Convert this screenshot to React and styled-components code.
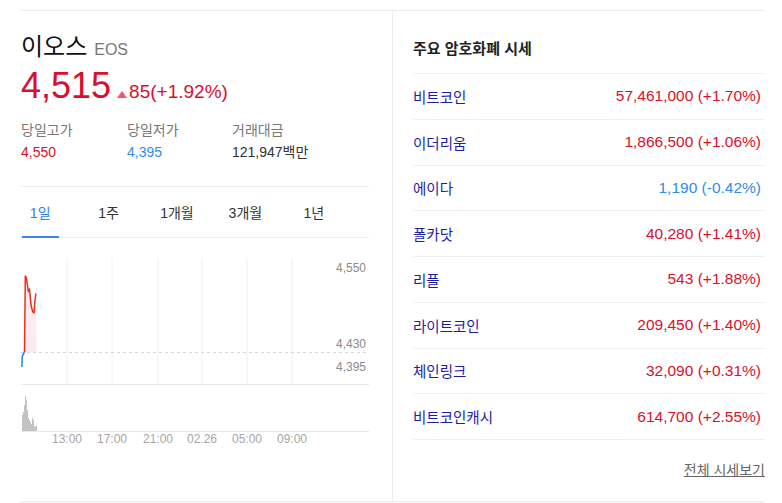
import React from 'react';
import styled, { createGlobalStyle } from 'styled-components';

const GlobalStyle = createGlobalStyle`
  body {
    margin: 0;
    background: #fff;
    font-family: "Liberation Sans", "Noto Sans CJK KR", sans-serif;
  }
`;

const RED = '#d9102a';
const BLUE = '#2f8cf0';

const Board = styled.div`
  display: grid;
  grid-template-columns: 371px 1fr;
  width: 744px;
  height: 492px;
  margin: 10px 0 0 21px;
  box-sizing: border-box;
  border-top: 1px solid #ebebeb;
  border-bottom: 1px solid #ebebeb;
`;

const CoinPanel = styled.section`
  padding: 23px 23px 0 0;
`;

const TitleRow = styled.div`
  display: flex;
  align-items: baseline;
  height: 26px;
  line-height: 26px;
`;

const CoinName = styled.h2`
  margin: 0;
  font-size: 24px;
  font-weight: 400;
  color: #111;
`;

const Symbol = styled.span`
  margin-left: 7px;
  font-size: 16px;
  color: #777;
`;

const PriceRow = styled.div`
  display: flex;
  align-items: baseline;
  margin-top: 6px;
  height: 40px;
  line-height: 40px;
  color: ${RED};
`;

const Price = styled.strong`
  font-size: 36px;
  font-weight: 400;
  margin-right: 6px;
`;

const UpMark = styled.span`
  display: inline-block;
  width: 0;
  height: 0;
  border-left: 5.5px solid transparent;
  border-right: 5.5px solid transparent;
  border-bottom: 7px solid #f25563;
  margin-right: 2px;
`;

const Change = styled.span`
  font-size: 19px;
`;

const Stats = styled.dl`
  display: grid;
  grid-template-columns: 106px 105px 1fr;
  margin: 14px 0 0;
  padding-bottom: 24px;
  border-bottom: 1px solid #ededed;
`;

const Stat = styled.div`
  display: flex;
  flex-direction: column;
`;

const StatLabel = styled.dt`
  font-size: 14px;
  line-height: 20px;
  color: #777;
`;

const StatValue = styled.dd`
  margin: 2px 0 0;
  font-size: 14px;
  line-height: 20px;
  color: ${({ $tone }) => ($tone === 'up' ? RED : $tone === 'down' ? BLUE : '#333')};
`;

const TabBar = styled.div`
  height: 50px;
  border-bottom: 1px solid #f0f0f0;
`;

const TabList = styled.ul`
  display: flex;
  height: 100%;
  margin: 0 0 0 -15px;
  padding: 0;
  list-style: none;
`;

const Tab = styled.li`
  display: flex;
  justify-content: center;
  width: 68.4px;
  height: 100%;
`;

const TabLabel = styled.span`
  display: flex;
  align-items: center;
  padding: 0 8px;
  margin-bottom: -1px;
  font-size: 14px;
  color: ${({ $active }) => ($active ? '#2f7fee' : '#333')};
  border-bottom: 2px solid ${({ $active }) => ($active ? '#3b86ee' : 'transparent')};
`;

const ChartBox = styled.div`
  margin-top: 12px;
  height: 200px;
`;

const MarketPanel = styled.section`
  border-left: 1px solid #ebebeb;
  padding-left: 20px;
  display: flex;
  flex-direction: column;
`;

const MarketTitle = styled.h3`
  margin: 0;
  height: 62px;
  box-sizing: border-box;
  padding-top: 27px;
  font-size: 15px;
  line-height: 22px;
  font-weight: 700;
  color: #222;
`;

const MarketList = styled.ul`
  margin: 0;
  padding: 0;
  list-style: none;
  border-bottom: 1px solid #efefef;
`;

const MarketRow = styled.li`
  display: flex;
  align-items: center;
  justify-content: space-between;
  height: 45.75px;
  box-sizing: border-box;
  padding-right: 4px;
  border-top: 1px solid #efefef;
`;

const MarketName = styled.a`
  font-size: 14.5px;
  color: #1c1ca6;
  text-decoration: none;
`;

const MarketValue = styled.span`
  font-size: 15.5px;
  color: ${({ $down }) => ($down ? BLUE : RED)};
`;

const MoreLink = styled.a`
  align-self: flex-end;
  margin-top: 21px;
  font-size: 14px;
  line-height: 18px;
  color: #666;
  text-decoration: underline;
`;

const stats = [
  { label: '당일고가', value: '4,550', tone: 'up' },
  { label: '당일저가', value: '4,395', tone: 'down' },
  { label: '거래대금', value: '121,947백만' },
];

const tabs = ['1일', '1주', '1개월', '3개월', '1년'];

const markets = [
  { name: '비트코인', value: '57,461,000 (+1.70%)' },
  { name: '이더리움', value: '1,866,500 (+1.06%)' },
  { name: '에이다', value: '1,190 (-0.42%)', down: true },
  { name: '폴카닷', value: '40,280 (+1.41%)' },
  { name: '리플', value: '543 (+1.88%)' },
  { name: '라이트코인', value: '209,450 (+1.40%)' },
  { name: '체인링크', value: '32,090 (+0.31%)' },
  { name: '비트코인캐시', value: '614,700 (+2.55%)' },
];

const gridX = [46, 91, 137, 181, 226, 271];
const timeLabels = ['13:00', '17:00', '21:00', '02.26', '05:00', '09:00'];
const volumeTops = [165, 162, 155, 146, 150, 160, 168, 170, 172, 174, 168, 170, 176, 177, 175];

function PriceChart() {
  return (
    <svg width="348" height="200" viewBox="0 0 348 200">
      {gridX.map((x) => (
        <line key={x} x1={x} y1="8" x2={x} y2="134" stroke="#f0f0f0" strokeWidth="1" />
      ))}
      <line x1="0" y1="134.5" x2="348" y2="134.5" stroke="#e8e8e8" />
      <line x1="0" y1="102.5" x2="348" y2="102.5" stroke="#d8d8d8" strokeDasharray="3 3" />
      <path
        d="M3.5 102 L4.3 26 L5 27 L5.7 30 L7.3 41.7 L8.5 39 L10 55 L11.7 61.7 L13 63 L14 50 L15 43.3 L15.5 102 Z"
        fill="#fdecef"
      />
      <path d="M0.8 117 L1.3 106 L3.5 102" fill="none" stroke="#2f8cf0" strokeWidth="1.6" />
      <path
        d="M3.5 102 L4.3 26 L5 27 L5.7 30 L7.3 41.7 L8.5 39 L10 55 L11.7 61.7 L13 63 L14 50 L15 43.3"
        fill="none"
        stroke="#e8321e"
        strokeWidth="1.5"
        strokeLinejoin="round"
      />
      <g fontFamily="Liberation Sans, sans-serif" fontSize="12" fill="#8a8a8a" textAnchor="end">
        <text x="345" y="22">4,550</text>
        <text x="345" y="98">4,430</text>
        <text x="345" y="121">4,395</text>
      </g>
      {volumeTops.map((top, i) => (
        <rect key={i} x={1 + i} y={top} width="0.8" height={181 - top} fill="#b5b5b5" />
      ))}
      <line x1="0" y1="181.5" x2="348" y2="181.5" stroke="#e8e8e8" />
      <g fontFamily="Liberation Sans, sans-serif" fontSize="12" fill="#a6a6a6" textAnchor="middle">
        {timeLabels.map((t, i) => (
          <text key={t} x={gridX[i]} y="193">
            {t}
          </text>
        ))}
      </g>
    </svg>
  );
}

export default function App() {
  return (
    <>
      <GlobalStyle />
      <Board>
        <CoinPanel>
          <TitleRow>
            <CoinName>이오스</CoinName>
            <Symbol>EOS</Symbol>
          </TitleRow>
          <PriceRow>
            <Price>4,515</Price>
            <UpMark />
            <Change>85(+1.92%)</Change>
          </PriceRow>
          <Stats>
            {stats.map((s) => (
              <Stat key={s.label}>
                <StatLabel>{s.label}</StatLabel>
                <StatValue $tone={s.tone}>{s.value}</StatValue>
              </Stat>
            ))}
          </Stats>
          <TabBar>
            <TabList>
              {tabs.map((t, i) => (
                <Tab key={t}>
                  <TabLabel $active={i === 0}>{t}</TabLabel>
                </Tab>
              ))}
            </TabList>
          </TabBar>
          <ChartBox>
            <PriceChart />
          </ChartBox>
        </CoinPanel>
        <MarketPanel>
          <MarketTitle>주요 암호화폐 시세</MarketTitle>
          <MarketList>
            {markets.map((m) => (
              <MarketRow key={m.name}>
                <MarketName href="#">{m.name}</MarketName>
                <MarketValue $down={m.down}>{m.value}</MarketValue>
              </MarketRow>
            ))}
          </MarketList>
          <MoreLink href="#">전체 시세보기</MoreLink>
        </MarketPanel>
      </Board>
    </>
  );
}
